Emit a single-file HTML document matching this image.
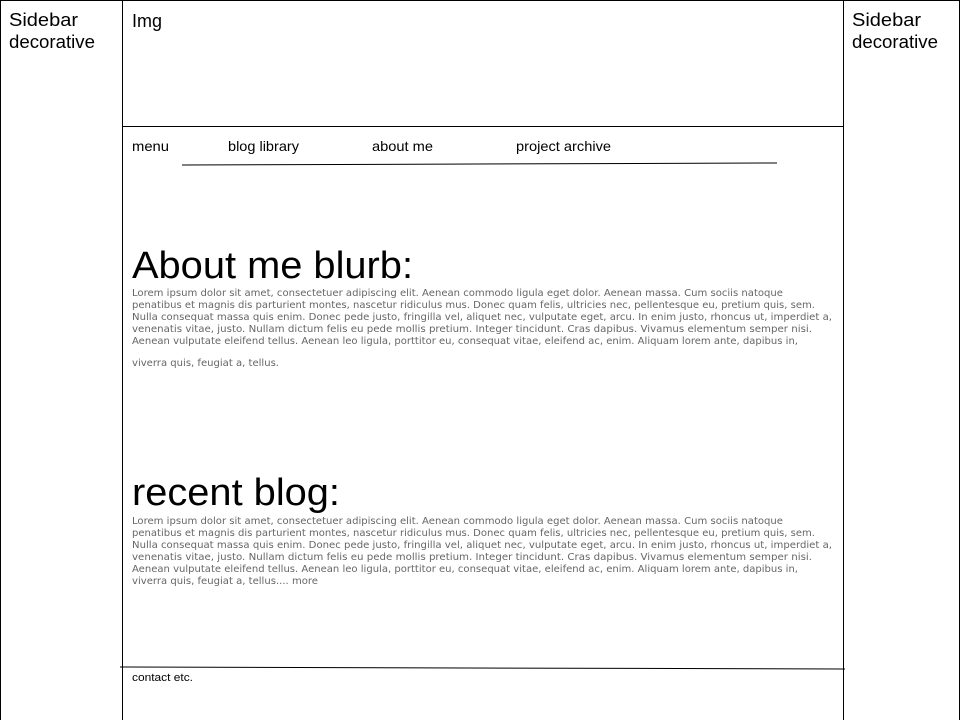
<!DOCTYPE html>
<html><head><meta charset="utf-8"><style>
html,body{margin:0;padding:0;background:#fff;width:960px;height:720px;overflow:hidden}
svg{display:block}
.s{font-family:"Liberation Sans",Arial,sans-serif;fill:#000}
.b{font-family:"DejaVu Sans","Liberation Sans",sans-serif;fill:#666;font-size:9.5px}
</style></head><body>
<svg width="960" height="720" xmlns="http://www.w3.org/2000/svg">
<rect x="0.5" y="0.5" width="959" height="730" fill="none" stroke="#000"/>
<line x1="122.5" y1="0" x2="122.5" y2="720" stroke="#000"/>
<line x1="843.5" y1="0" x2="843.5" y2="720" stroke="#000"/>
<line x1="122" y1="126.5" x2="843" y2="126.5" stroke="#000"/>
<line x1="182" y1="165" x2="777" y2="163" stroke="#000"/>
<line x1="120" y1="667" x2="845" y2="669" stroke="#000"/>

<text class="s" x="9" y="26" font-size="18" textLength="69" lengthAdjust="spacingAndGlyphs">Sidebar</text>
<text class="s" x="9" y="48" font-size="18" textLength="86" lengthAdjust="spacingAndGlyphs">decorative</text>
<text class="s" x="852" y="26" font-size="18" textLength="69" lengthAdjust="spacingAndGlyphs">Sidebar</text>
<text class="s" x="852" y="48" font-size="18" textLength="86" lengthAdjust="spacingAndGlyphs">decorative</text>
<text class="s" x="132" y="27" font-size="18" textLength="30" lengthAdjust="spacingAndGlyphs">Img</text>

<text class="s" x="132" y="151" font-size="14" textLength="37" lengthAdjust="spacingAndGlyphs">menu</text>
<text class="s" x="228" y="151" font-size="14" textLength="71" lengthAdjust="spacingAndGlyphs">blog library</text>
<text class="s" x="372" y="151" font-size="14" textLength="61" lengthAdjust="spacingAndGlyphs">about me</text>
<text class="s" x="516" y="151" font-size="14" textLength="95" lengthAdjust="spacingAndGlyphs">project archive</text>

<text class="s" x="132" y="278" font-size="38" textLength="281" lengthAdjust="spacingAndGlyphs">About me blurb:</text>
<text class="b" x="132" y="296" textLength="651" lengthAdjust="spacingAndGlyphs">Lorem ipsum dolor sit amet, consectetuer adipiscing elit. Aenean commodo ligula eget dolor. Aenean massa. Cum sociis natoque</text>
<text class="b" x="132" y="308" textLength="683" lengthAdjust="spacingAndGlyphs">penatibus et magnis dis parturient montes, nascetur ridiculus mus. Donec quam felis, ultricies nec, pellentesque eu, pretium quis, sem.</text>
<text class="b" x="132" y="320" textLength="700" lengthAdjust="spacingAndGlyphs">Nulla consequat massa quis enim. Donec pede justo, fringilla vel, aliquet nec, vulputate eget, arcu. In enim justo, rhoncus ut, imperdiet a,</text>
<text class="b" x="132" y="332" textLength="680" lengthAdjust="spacingAndGlyphs">venenatis vitae, justo. Nullam dictum felis eu pede mollis pretium. Integer tincidunt. Cras dapibus. Vivamus elementum semper nisi.</text>
<text class="b" x="132" y="344" textLength="666" lengthAdjust="spacingAndGlyphs">Aenean vulputate eleifend tellus. Aenean leo ligula, porttitor eu, consequat vitae, eleifend ac, enim. Aliquam lorem ante, dapibus in,</text>
<text class="b" x="132" y="366" textLength="147" lengthAdjust="spacingAndGlyphs">viverra quis, feugiat a, tellus.</text>

<text class="s" x="132" y="505" font-size="38" textLength="208" lengthAdjust="spacingAndGlyphs">recent blog:</text>
<text class="b" x="132" y="524" textLength="651" lengthAdjust="spacingAndGlyphs">Lorem ipsum dolor sit amet, consectetuer adipiscing elit. Aenean commodo ligula eget dolor. Aenean massa. Cum sociis natoque</text>
<text class="b" x="132" y="536" textLength="683" lengthAdjust="spacingAndGlyphs">penatibus et magnis dis parturient montes, nascetur ridiculus mus. Donec quam felis, ultricies nec, pellentesque eu, pretium quis, sem.</text>
<text class="b" x="132" y="548" textLength="700" lengthAdjust="spacingAndGlyphs">Nulla consequat massa quis enim. Donec pede justo, fringilla vel, aliquet nec, vulputate eget, arcu. In enim justo, rhoncus ut, imperdiet a,</text>
<text class="b" x="132" y="560" textLength="680" lengthAdjust="spacingAndGlyphs">venenatis vitae, justo. Nullam dictum felis eu pede mollis pretium. Integer tincidunt. Cras dapibus. Vivamus elementum semper nisi.</text>
<text class="b" x="132" y="572" textLength="666" lengthAdjust="spacingAndGlyphs">Aenean vulputate eleifend tellus. Aenean leo ligula, porttitor eu, consequat vitae, eleifend ac, enim. Aliquam lorem ante, dapibus in,</text>
<text class="b" x="132" y="584" textLength="186" lengthAdjust="spacingAndGlyphs">viverra quis, feugiat a, tellus.... more</text>

<text class="s" x="132" y="681" font-size="11" textLength="61" lengthAdjust="spacingAndGlyphs">contact etc.</text>
</svg>
</body></html>
